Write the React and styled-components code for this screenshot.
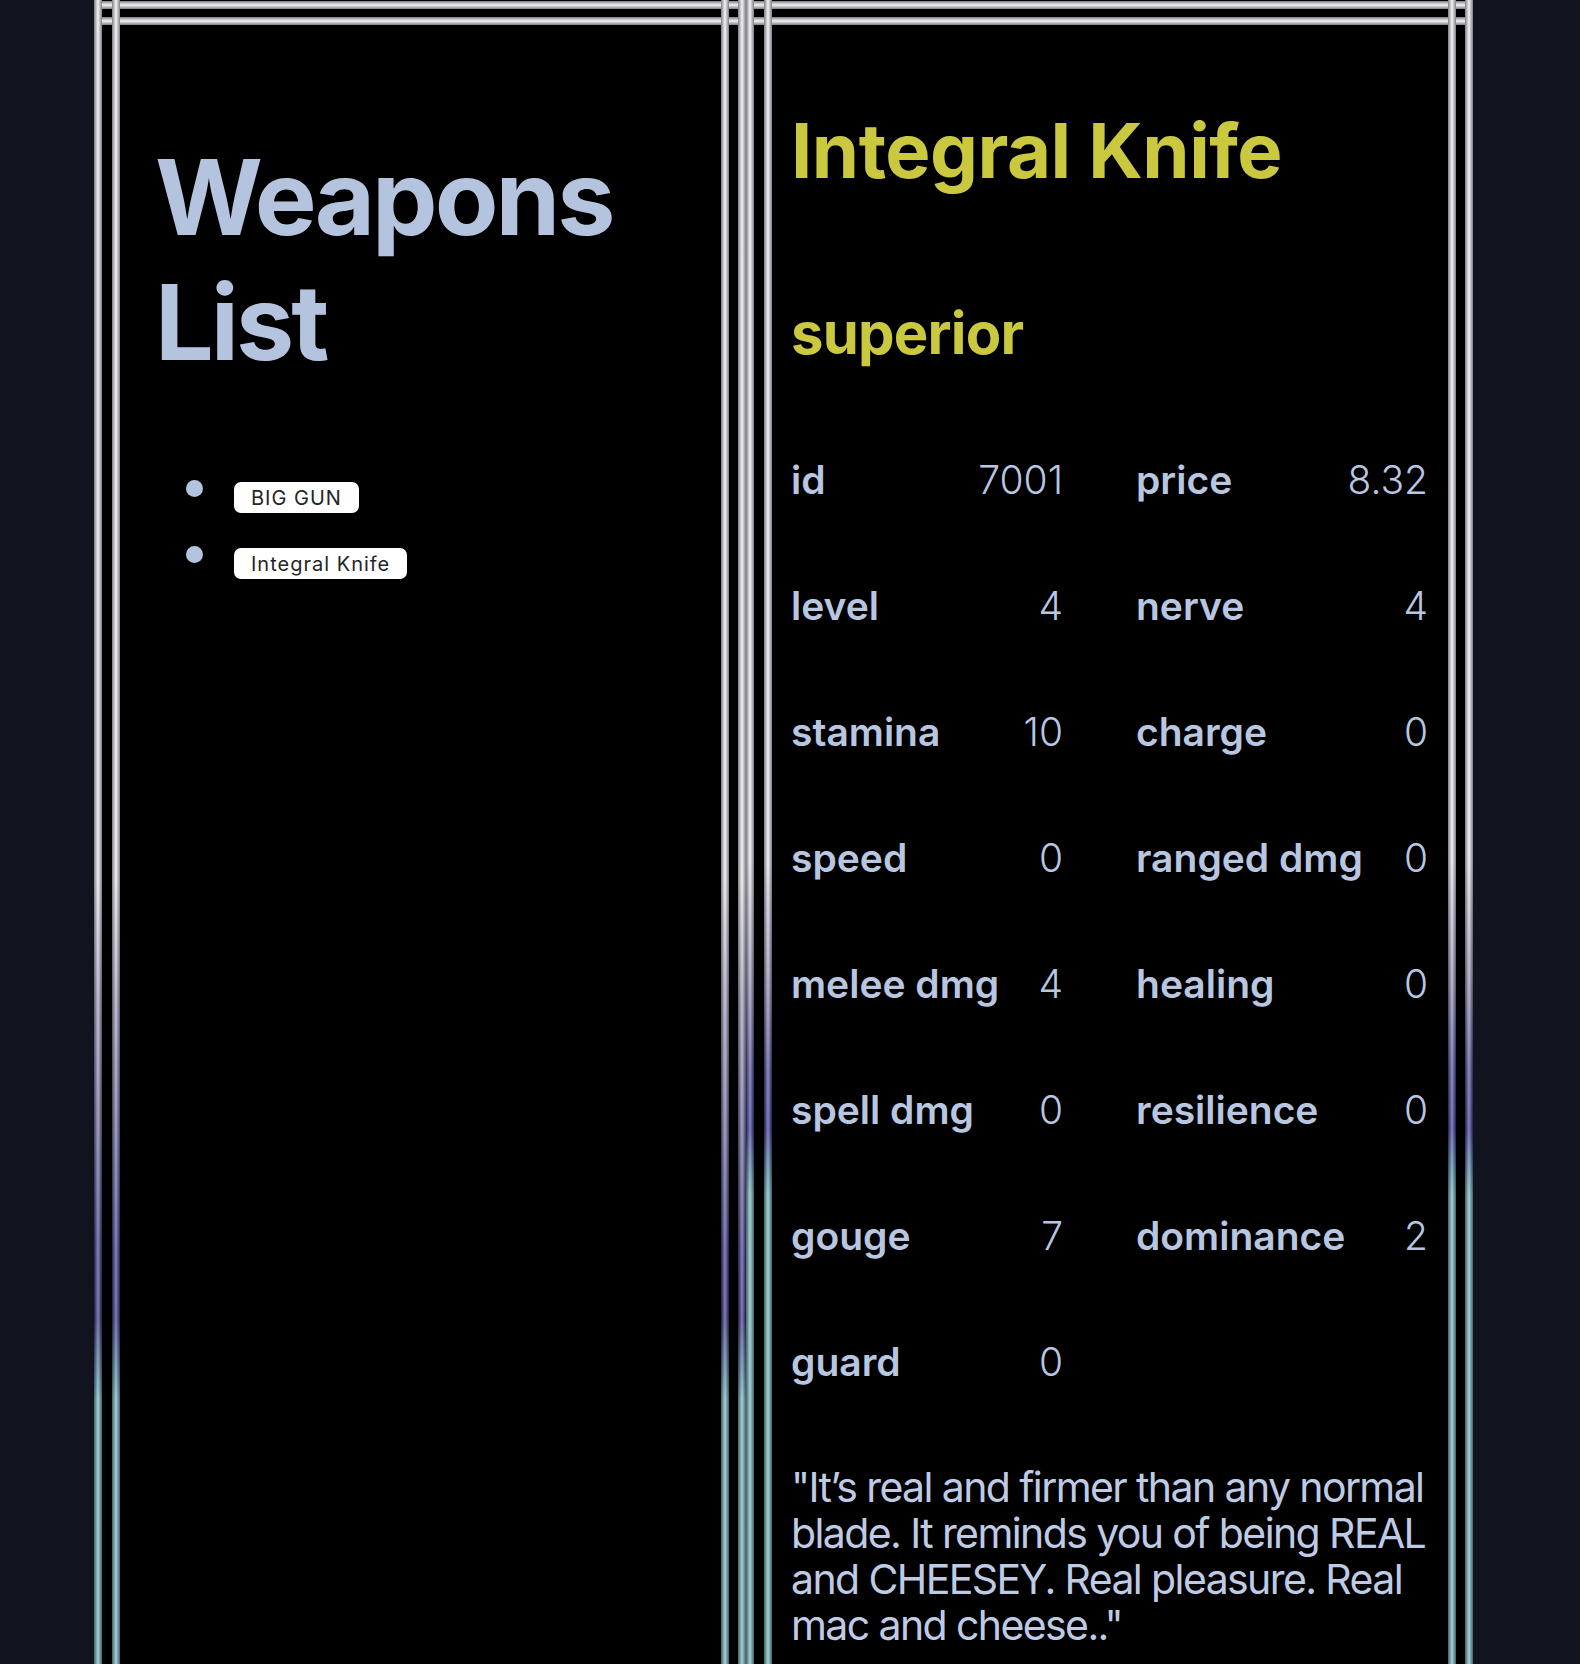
import React from 'react';
import styled, { createGlobalStyle } from 'styled-components';

const GlobalStyle = createGlobalStyle`
  html, body {
    margin: 0;
    padding: 0;
    background: #11131f;
  }
  body {
    font-family: Inter, "Liberation Sans", sans-serif;
  }
`;

// metal rails: full-length stripes, vertical ones drawn over horizontal ones
const shade = dir =>
  `linear-gradient(${dir}, rgba(0,0,0,.42), rgba(255,255,255,.34) 45%, rgba(255,255,255,.34) 55%, rgba(0,0,0,.42))`;

const rails = stops => {
  const color = `linear-gradient(to bottom, ${stops})`;
  const silver = 'linear-gradient(#dadae2, #dadae2)';
  const vPos = ['left 0 top 0', 'left 18px top 0', 'right 17px top 0', 'right 0 top 0'];
  const hPos = ['left 0 top 1px', 'left 0 top 17px'];
  const layers = [
    ...vPos.map(p => `${shade('to right')} ${p} / 8px 100% no-repeat`),
    ...vPos.map(p => `${color} ${p} / 8px 100% no-repeat`),
    ...hPos.map(p => `${shade('to bottom')} ${p} / 100% 8px no-repeat`),
    ...hPos.map(p => `${silver} ${p} / 100% 8px no-repeat`),
  ];
  return layers.join(', ') + ', #000';
};

const leftStops =
  '#dadae2 0, #dadae2 880px, #9a98b4 1000px, #6c6898 1120px, #3a3484 1250px, #322c78 1320px, #4a7898 1370px, #6aaab2 1400px, #6aaab2 100%';
const rightStops =
  '#dadae2 0, #dadae2 860px, #8e8cac 980px, #4a4490 1070px, #35308a 1130px, #4e80a0 1170px, #6aaab2 1195px, #6aaab2 100%';

const Page = styled.div`
  display: flex;
  align-items: stretch;
  padding-left: 94px;
`;

const Panel = styled.section`
  box-sizing: border-box;
  width: ${p => p.$width}px;
  padding: ${p => p.$pad};
  background: ${p => rails(p.$stops)};
`;

const ListTitle = styled.h1`
  margin: 109px 0 0;
  font-size: 104px;
  line-height: 125px;
  font-weight: 700;
  letter-spacing: -3px;
  color: #b5c4de;
`;

const WeaponList = styled.ul`
  list-style: none;
  margin: 95px 0 0;
  padding: 0 0 0 31px;
`;

const WeaponItem = styled.li`
  display: flex;
  align-items: flex-start;
  gap: 31px;

  & + & {
    margin-top: 33px;
  }
`;

const Bullet = styled.span`
  width: 17px;
  height: 17px;
  border-radius: 50%;
  background: #b5c4de;
  flex: none;
`;

const Chip = styled.button`
  margin-top: 2px;
  height: 31px;
  padding: 0 17px;
  border: none;
  border-radius: 7px;
  background: #fff;
  color: #252525;
  font-family: Inter, "Liberation Sans", sans-serif;
  font-size: 20px;
  letter-spacing: 1px;
  cursor: pointer;
`;

const DetailTitle = styled.h1`
  margin: 78px 0 0;
  font-size: 76px;
  line-height: 92px;
  font-weight: 700;
  letter-spacing: -0.5px;
  color: #c9c83f;
`;

const Rarity = styled.h2`
  margin: 102px 0 0;
  font-size: 58px;
  line-height: 70px;
  font-weight: 700;
  letter-spacing: -0.8px;
  color: #c9c83f;
`;

const StatGrid = styled.div`
  display: grid;
  grid-template-columns: 272px 292px;
  justify-content: space-between;
  row-gap: 79px;
  margin-top: 88px;
`;

const Stat = styled.div`
  display: flex;
  justify-content: space-between;
  font-size: 39px;
  line-height: 47px;
  color: #b8c6e0;
`;

const StatLabel = styled.span`
  font-weight: 600;
`;

const StatValue = styled.span`
  font-weight: 300;
`;

const Quote = styled.p`
  margin: 79px -10px 0 0;
  font-size: 41px;
  line-height: 46px;
  font-weight: 400;
  letter-spacing: -1.6px;
  color: #bfcbe4;
`;

const weapons = ['BIG GUN', 'Integral Knife'];

const stats = [
  ['id', '7001'],
  ['price', '8.32'],
  ['level', '4'],
  ['nerve', '4'],
  ['stamina', '10'],
  ['charge', '0'],
  ['speed', '0'],
  ['ranged dmg', '0'],
  ['melee dmg', '4'],
  ['healing', '0'],
  ['spell dmg', '0'],
  ['resilience', '0'],
  ['gouge', '7'],
  ['dominance', '2'],
  ['guard', '0'],
];

export default function App() {
  return (
    <>
      <GlobalStyle />
      <Page>
        <Panel $width={652} $pad="26px 40px 140px 61px" $stops={leftStops}>
          <ListTitle>Weapons List</ListTitle>
          <WeaponList>
            {weapons.map(name => (
              <WeaponItem key={name}>
                <Bullet />
                <Chip>{name}</Chip>
              </WeaponItem>
            ))}
          </WeaponList>
        </Panel>
        <Panel $width={727} $pad="26px 45px 140px 45px" $stops={rightStops}>
          <DetailTitle>Integral Knife</DetailTitle>
          <Rarity>superior</Rarity>
          <StatGrid>
            {stats.map(([label, value]) => (
              <Stat key={label}>
                <StatLabel>{label}</StatLabel>
                <StatValue>{value}</StatValue>
              </Stat>
            ))}
          </StatGrid>
          <Quote>
            "It’s real and firmer than any normal blade. It reminds you of being REAL and CHEESEY. Real
            pleasure. Real mac and cheese.."
          </Quote>
        </Panel>
      </Page>
    </>
  );
}
